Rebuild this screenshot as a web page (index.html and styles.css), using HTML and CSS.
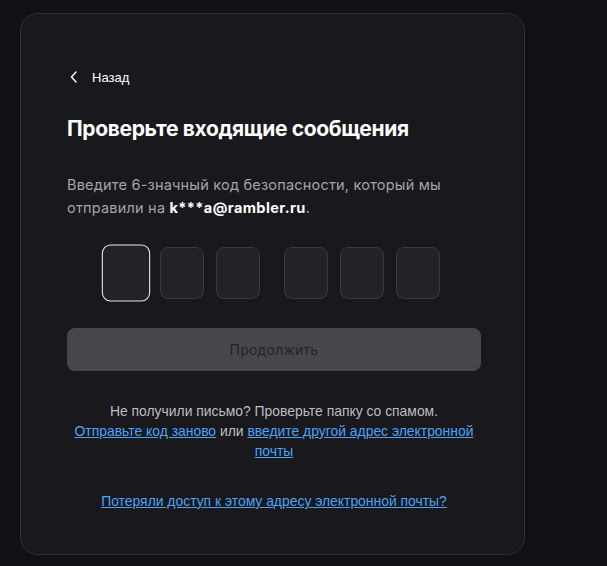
FILE: index.html
```html
<!DOCTYPE html>
<html lang="ru">
<head>
  <meta charset="UTF-8" />
  <meta name="viewport" content="width=device-width, initial-scale=1" />
  <title>Проверьте входящие сообщения</title>
  <link rel="stylesheet" href="styles.css">
</head>
<body>
  <main class="card">
    <a href="#" class="back">
      <svg class="back-icon" width="8" height="12" viewBox="0 0 8 12" aria-hidden="true">
        <path d="M6 1 L1.5 6 L6 11" fill="none" stroke="currentColor" stroke-width="1.4" stroke-linecap="round" stroke-linejoin="round"/>
      </svg>
      <span>Назад</span>
    </a>

    <h1 class="title">Проверьте входящие сообщения</h1>
    <p class="lead">Введите 6-значный код безопасности, который мы отправили на <b>k***a@rambler.ru</b>.</p>

    <form class="code-form">
      <div class="otp">
        <div class="otp-group">
          <input class="otp-cell focused" maxlength="1" aria-label="Цифра 1">
          <input class="otp-cell" maxlength="1" aria-label="Цифра 2">
          <input class="otp-cell" maxlength="1" aria-label="Цифра 3">
        </div>
        <div class="otp-group">
          <input class="otp-cell" maxlength="1" aria-label="Цифра 4">
          <input class="otp-cell" maxlength="1" aria-label="Цифра 5">
          <input class="otp-cell" maxlength="1" aria-label="Цифра 6">
        </div>
      </div>
      <button type="submit" class="submit" disabled>Продолжить</button>
    </form>

    <div class="help">
      <p>Не получили письмо? Проверьте папку со спамом.<br>
        <a href="#">Отправьте код заново</a> или <a href="#">введите другой адрес электронной почты</a></p>
      <p class="lost"><a href="#">Потеряли доступ к этому адресу электронной почты?</a></p>
    </div>
  </main>
</body>
</html>
```

FILE: styles.css
```css
:root {
  --page-bg: #111115;
  --card-bg: #19191d;
  --card-border: #303035;
  --cell-bg: #222227;
  --cell-border: #38383e;
  --text: #ffffff;
  --muted: #a3a3aa;
  --link: #4da3f5;
}
* { box-sizing: border-box; }
body {
  margin: 0;
  background: var(--page-bg);
  color: var(--text);
  font-family: Inter, 'Noto Sans', sans-serif;
  min-height: 100vh;
}
.card {
  width: 505px;
  height: 542px;
  margin: 13px 0 0 20px;
  background: var(--card-bg);
  border: 1px solid var(--card-border);
  border-radius: 18px;
  padding: 53px 43px 0 46px;
}
.back {
  display: inline-flex;
  align-items: center;
  gap: 14px;
  color: var(--text);
  text-decoration: none;
  font-family: 'Liberation Sans', Arial, sans-serif;
  font-size: 13px;
}
.back-icon {
  margin-left: 3px;
}
.title {
  margin: 27px 0 0;
  font-size: 21px;
  font-weight: 700;
  line-height: 30px;
  letter-spacing: -0.35px;
}
.lead {
  margin: 29px 0 0;
  color: var(--muted);
  font-size: 14.5px;
  line-height: 23px;
  letter-spacing: 0.2px;
}
.lead b {
  color: var(--text);
  font-weight: 700;
  letter-spacing: 0.4px;
}
.code-form {
  margin-top: 28px;
}
.otp {
  display: flex;
  justify-content: center;
  gap: 24px;
  padding-right: 4px;
}
.otp-group {
  display: flex;
  gap: 12px;
}
.otp-cell {
  width: 44px;
  height: 52px;
  background: var(--cell-bg);
  border: 1px solid var(--cell-border);
  border-radius: 8px;
  color: var(--text);
  font-size: 20px;
  text-align: center;
  outline: none;
}
.otp-cell.focused {
  transform: scale(1.1);
  border: 1.5px solid #e6e6ea;
}
.submit {
  display: block;
  width: 100%;
  height: 43px;
  margin-top: 29px;
  background: #46464b;
  border: none;
  border-radius: 8px;
  color: #242428;
  font-family: inherit;
  font-size: 14px;
  letter-spacing: 0.2px;
}
.help {
  margin-top: 30px;
  text-align: center;
  font-family: 'Liberation Sans', Arial, sans-serif;
  font-size: 13.9px;
  line-height: 20px;
  color: #bdbdc2;
}
.help p {
  margin: 0;
}
.help a {
  color: var(--link);
  text-decoration: underline;
}
.help .lost {
  margin-top: 30px;
}
```
